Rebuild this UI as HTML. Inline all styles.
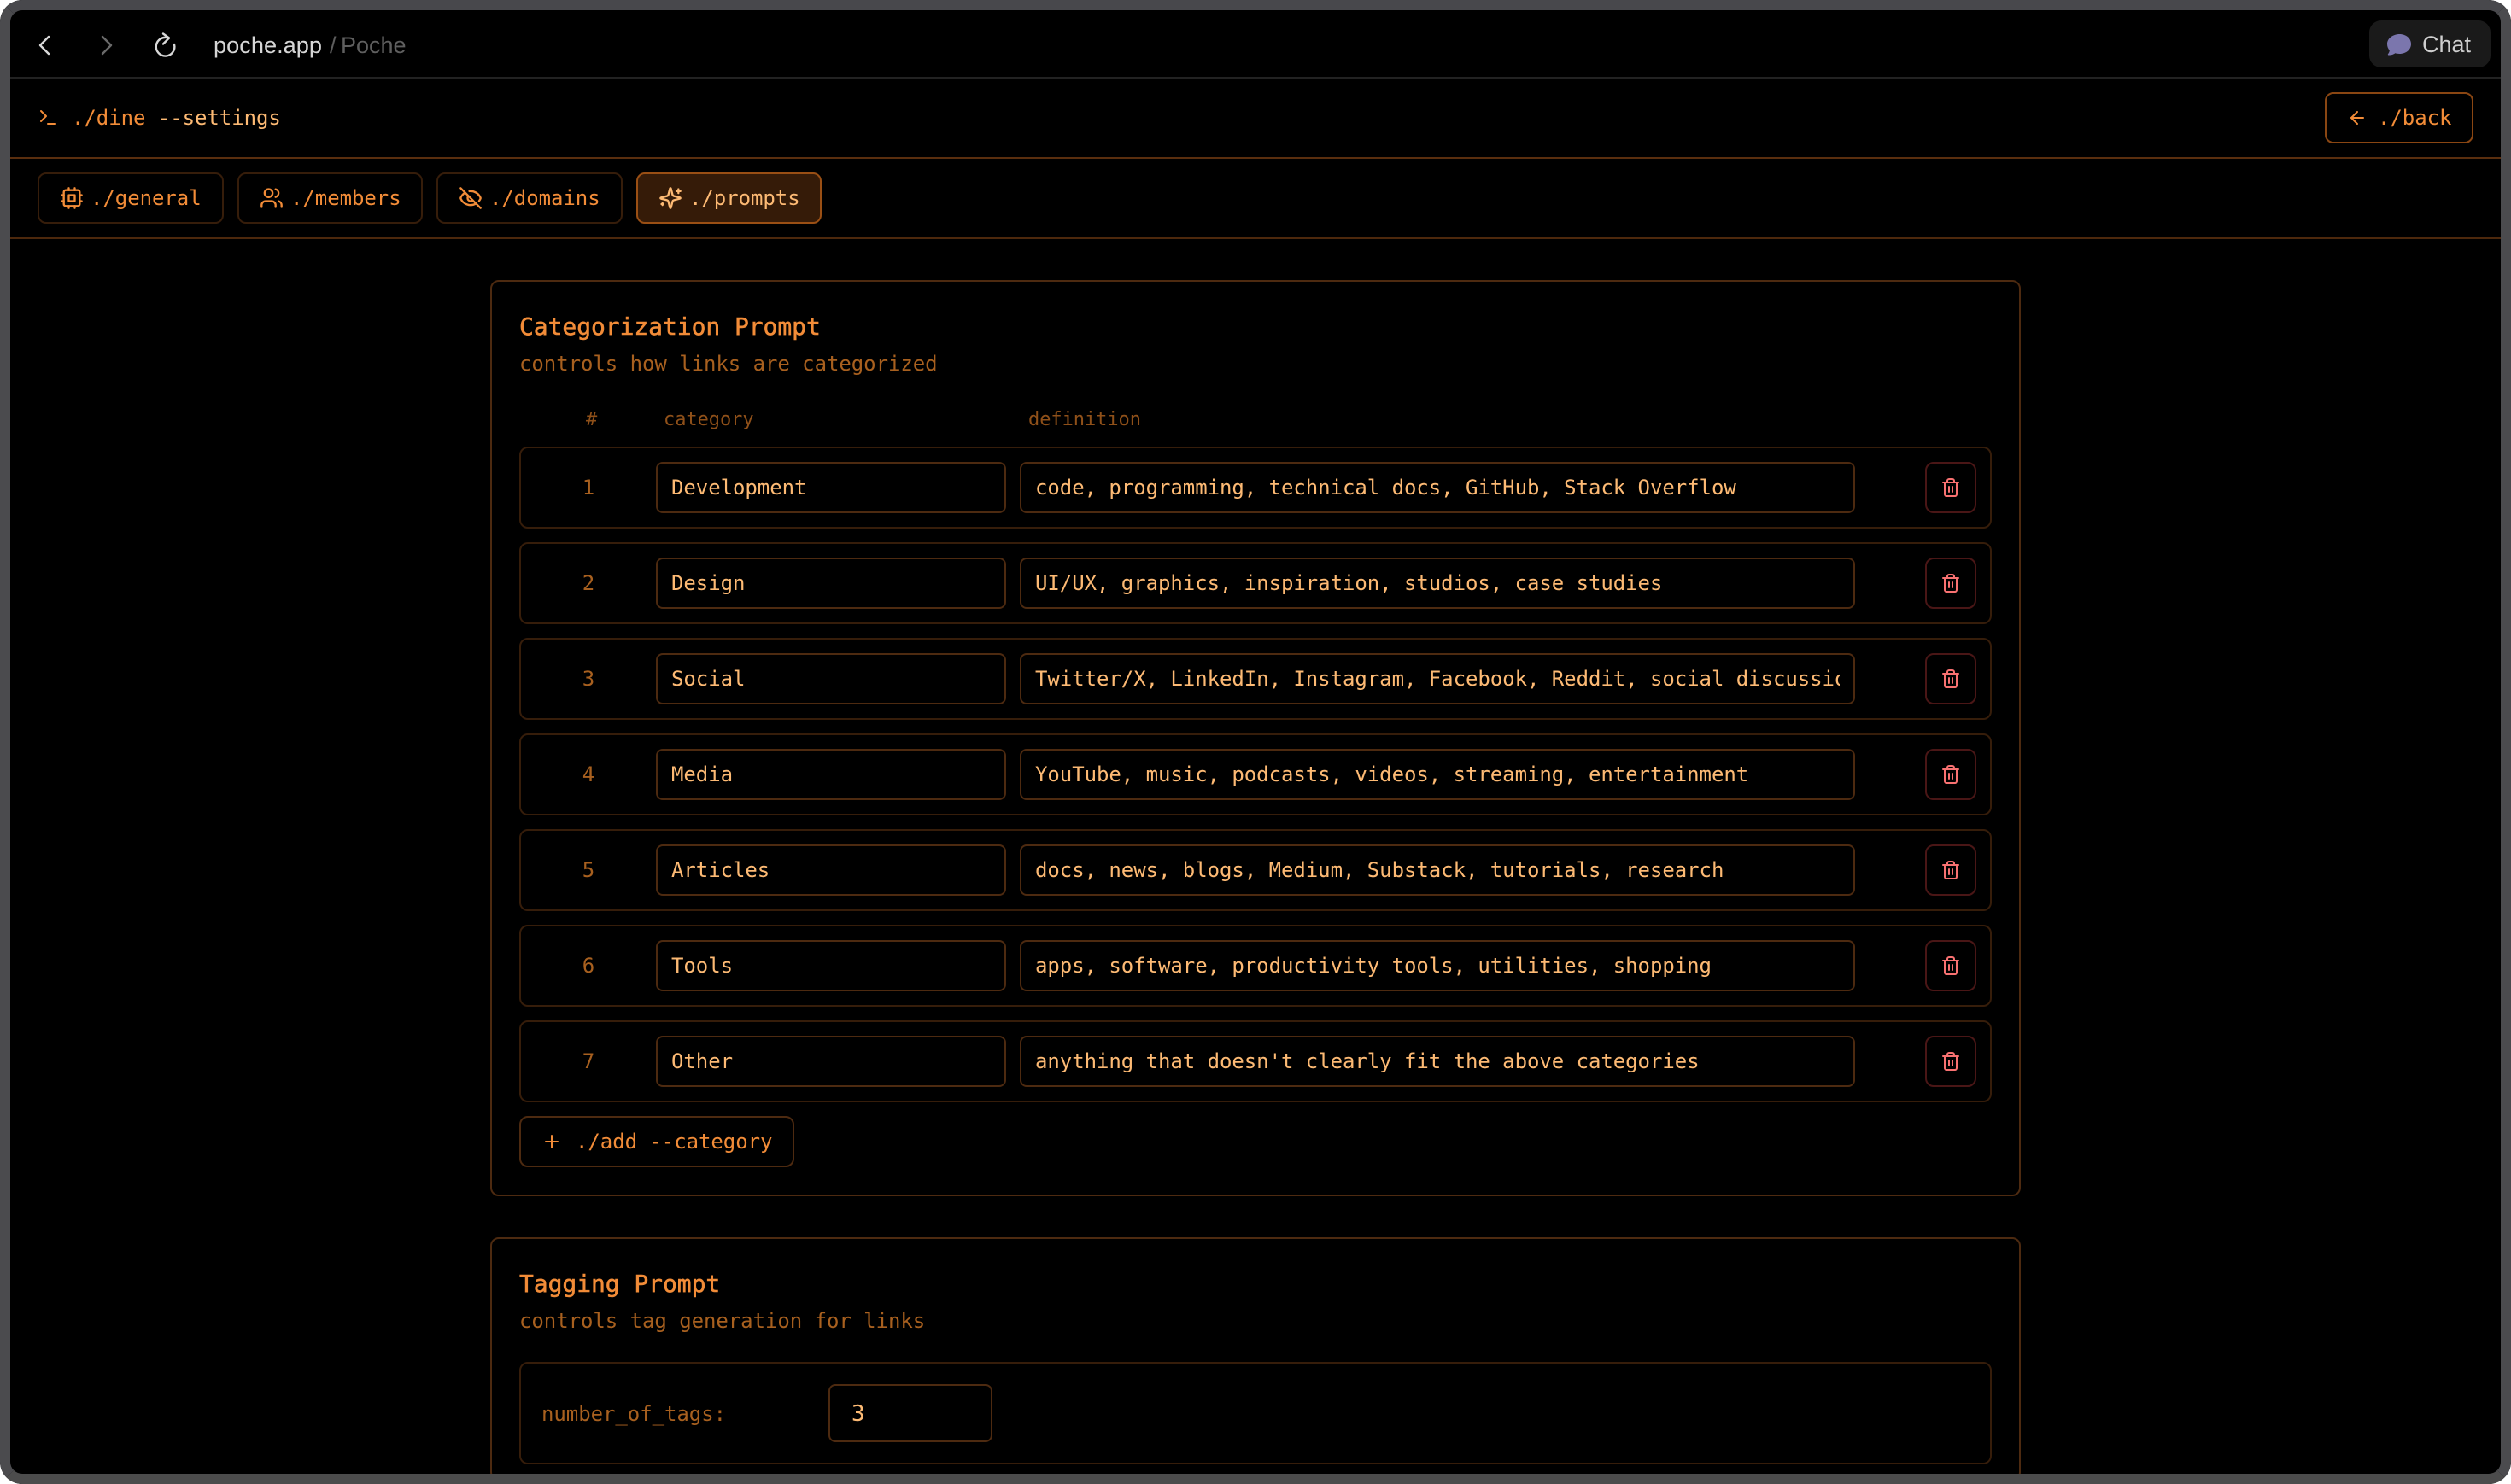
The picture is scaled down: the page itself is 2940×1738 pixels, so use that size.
<!DOCTYPE html>
<html><head><meta charset="utf-8"><title>Poche</title>
<style>
html,body{margin:0;padding:0;background:#fff;width:2940px;height:1738px;overflow:hidden}
#w{position:absolute;left:0;top:0;width:2940px;height:1738px;border-radius:26px;overflow:hidden;background:#000}
#f{position:absolute;left:0;top:0;width:2940px;height:1738px;box-sizing:border-box;border:12px solid #4b4b4e;border-top-color:#48484c;border-bottom-color:#4c4c4c;border-radius:26px;z-index:9}
.a{position:absolute;box-sizing:border-box}
.t{position:absolute;white-space:pre;font-family:"DejaVu Sans Mono","Liberation Mono",monospace;font-size:24px;letter-spacing:-.05px;line-height:32px;color:#f28c38}
.s{position:absolute;white-space:pre;font-family:"Liberation Sans",sans-serif;font-size:27px;line-height:32px}
.l{position:absolute;left:12px;width:2916px;height:2px}
.tab{position:absolute;top:202px;height:60px;box-sizing:border-box;border:2px solid #361d0a;border-radius:10px}
.bx{position:absolute;box-sizing:border-box;border:2px solid #4d2a10;border-radius:10px}
.row{position:absolute;left:608px;width:1724px;height:96px;box-sizing:border-box;border:2px solid #361d0a;border-radius:10px}
.inp{position:absolute;top:16px;height:60px;box-sizing:border-box;border:2px solid #4d2a10;border-radius:8px;background:#000;overflow:hidden;padding:0 16px;color:#fdba74;font-family:"DejaVu Sans Mono","Liberation Mono",monospace;font-size:24px;letter-spacing:-.05px;line-height:56px}
.inp span{display:block;overflow:hidden;white-space:pre}
.c1{left:158px;width:410px}
.c2{left:584px;width:978px}
.n{position:absolute;left:64px;width:30px;top:30px;text-align:center;color:#a8601f;font-family:"DejaVu Sans Mono","Liberation Mono",monospace;font-size:24px;line-height:32px}
.del{position:absolute;left:1644px;top:16px;width:60px;height:60px;box-sizing:border-box;border:2px solid #4a1616;border-radius:10px}
.del svg{position:absolute;left:16px;top:16px}
svg{display:block;fill:none;stroke-linecap:round;stroke-linejoin:round}
svg.ab{position:absolute}
.sub{color:#a8601f}
.hd{color:#8f5019;font-size:22px;letter-spacing:-.05px}
.ti{font-size:28px;line-height:36px;font-weight:400;-webkit-text-stroke:.5px #f28c38;letter-spacing:-.06px}
</style></head><body>
<div id="w">
<!-- browser bar -->
<svg class="ab" style="left:30px;top:20px" width="200" height="70" viewBox="0 0 200 70" stroke-width="2.400">
<path d="M27 23 17 33 27 43" stroke="#d8d8d8"/>
<path d="M90 23 100 33 90 43" stroke="#6a6a6a"/>
<path d="M167 24.500A10.800 10.800 0 1 0 174 32" stroke="#d8d8d8"/>
<path d="M161 19.500 168 24.500 161 31.500" stroke="#d8d8d8"/>
</svg>
<div class="s" style="left:250px;top:37px;color:#d6d6d6;font-size:27.200px">poche.app</div>
<div class="s" style="left:386px;top:37px;color:#5f5f5f">/</div>
<div class="s" style="left:399px;top:37px;color:#5f5f5f">Poche</div>
<div class="a" style="left:2774px;top:24px;width:142px;height:55px;background:#1a1a1a;border-radius:14px"></div>
<svg class="ab" style="left:2795px;top:40px" width="28" height="25" viewBox="0 0 28 25"><path fill="#7b76ad" d="M14.500 0C22 0 28 4.800 28 11.500S22 23 14.500 23C12.500 23 11 22.800 9.500 22.300 7.500 23.800 4.500 24.800 1.500 24.500.800 24.400.600 23.700 1 23.200 2 22 2.700 20.500 2.800 19 1 17 0 14.500 0 11.500 0 4.800 7 0 14.500 0Z"/></svg>
<div class="s" style="left:2836px;top:36px;color:#cfcfcf">Chat</div>
<div class="l" style="top:90px;background:#222"></div>

<!-- header -->
<svg class="ab" style="left:44px;top:126px" width="24" height="24" viewBox="0 0 24 24" stroke="#f28c38" stroke-width="2"><polyline points="4 17 10 11 4 5" transform="translate(0,-1)"/><line x1="12" y1="19" x2="20" y2="19"/></svg>
<div class="t" style="left:84px;top:122px">./dine <span style="color:#fdba74">--settings</span></div>
<div class="bx" style="left:2722px;top:108px;width:174px;height:60px;border-color:#8a4612"></div>
<svg class="ab" style="left:2748px;top:126px" width="24" height="24" viewBox="0 0 24 24" stroke="#f28c38" stroke-width="2"><path d="m12 19-7-7 7-7"/><path d="M19 12H5"/></svg>
<div class="t" style="left:2784px;top:122px">./back</div>
<div class="l" style="top:184px;background:#5a2e0e"></div>

<!-- tabs -->
<div class="tab" style="left:44px;width:218px"></div>
<svg class="ab" style="left:70px;top:218px" width="28" height="28" viewBox="0 0 24 24" stroke="#f28c38" stroke-width="2"><rect x="4" y="4" width="16" height="16" rx="2"/><rect x="9" y="9" width="6" height="6"/><path d="M15 2v2M15 20v2M2 15h2M2 9h2M20 15h2M20 9h2M9 2v2M9 20v2"/></svg>
<div class="t" style="left:106px;top:216px">./general</div>
<div class="tab" style="left:278px;width:217px"></div>
<svg class="ab" style="left:304px;top:218px" width="28" height="28" viewBox="0 0 24 24" stroke="#f28c38" stroke-width="2"><path d="M16 21v-2a4 4 0 0 0-4-4H6a4 4 0 0 0-4 4v2"/><circle cx="9" cy="7" r="4"/><path d="M22 21v-2a4 4 0 0 0-3-3.870"/><path d="M16 3.130a4 4 0 0 1 0 7.750"/></svg>
<div class="t" style="left:340px;top:216px">./members</div>
<div class="tab" style="left:511px;width:218px"></div>
<svg class="ab" style="left:537px;top:218px" width="28" height="28" viewBox="0 0 24 24" stroke="#f28c38" stroke-width="2"><path d="M10.733 5.076a10.744 10.744 0 0 1 11.205 6.575 1 1 0 0 1 0 .696 10.747 10.747 0 0 1-1.444 2.490"/><path d="M14.084 14.158a3 3 0 0 1-4.242-4.242"/><path d="M17.479 17.499a10.750 10.750 0 0 1-15.417-5.151 1 1 0 0 1 0-.696 10.750 10.750 0 0 1 4.446-5.143"/><path d="m2 2 20 20"/></svg>
<div class="t" style="left:573px;top:216px">./domains</div>
<div class="tab" style="left:745px;width:217px;background:#351b08;border-color:#9a4f14"></div>
<svg class="ab" style="left:771px;top:218px" width="28" height="28" viewBox="0 0 24 24" stroke="#fdba74" stroke-width="2"><path d="M9.937 15.500A2 2 0 0 0 8.500 14.063l-6.135-1.582a.5.5 0 0 1 0-.962L8.500 9.936A2 2 0 0 0 9.937 8.500l1.582-6.135a.5.5 0 0 1 .963 0L14.063 8.500A2 2 0 0 0 15.500 9.937l6.135 1.581a.5.5 0 0 1 0 .964L15.500 14.063a2 2 0 0 0-1.437 1.437l-1.582 6.135a.5.5 0 0 1-.963 0z"/><path d="M20 3v4M22 5h-4M4 17v2M5 18H3"/></svg>
<div class="t" style="left:807px;top:216px;color:#fdba74">./prompts</div>
<div class="l" style="top:278px;background:#4d280c"></div>

<!-- card 1 -->
<div class="bx" style="left:574px;top:328px;width:1792px;height:1073px"></div>
<div class="t ti" style="left:608px;top:365px">Categorization Prompt</div>
<div class="t sub" style="left:608px;top:410px">controls how links are categorized</div>
<div class="t hd" style="left:686px;top:476px">#</div>
<div class="t hd" style="left:777px;top:476px">category</div>
<div class="t hd" style="left:1204px;top:476px">definition</div>

<div class="row" style="top:523px"><div class="n">1</div><div class="inp c1"><span>Development</span></div><div class="inp c2"><span>code, programming, technical docs, GitHub, Stack Overflow</span></div><div class="del"><svg width="24" height="24" viewBox="0 0 24 24" stroke="#f87171" stroke-width="2"><path d="M3 6h18M19 6v14c0 1-1 2-2 2H7c-1 0-2-1-2-2V6M8 6V4c0-1 1-2 2-2h4c1 0 2 1 2 2v2M10 11v6M14 11v6"/></svg></div></div>
<div class="row" style="top:635px"><div class="n">2</div><div class="inp c1"><span>Design</span></div><div class="inp c2"><span>UI/UX, graphics, inspiration, studios, case studies</span></div><div class="del"><svg width="24" height="24" viewBox="0 0 24 24" stroke="#f87171" stroke-width="2"><path d="M3 6h18M19 6v14c0 1-1 2-2 2H7c-1 0-2-1-2-2V6M8 6V4c0-1 1-2 2-2h4c1 0 2 1 2 2v2M10 11v6M14 11v6"/></svg></div></div>
<div class="row" style="top:747px"><div class="n">3</div><div class="inp c1"><span>Social</span></div><div class="inp c2"><span>Twitter/X, LinkedIn, Instagram, Facebook, Reddit, social discussions</span></div><div class="del"><svg width="24" height="24" viewBox="0 0 24 24" stroke="#f87171" stroke-width="2"><path d="M3 6h18M19 6v14c0 1-1 2-2 2H7c-1 0-2-1-2-2V6M8 6V4c0-1 1-2 2-2h4c1 0 2 1 2 2v2M10 11v6M14 11v6"/></svg></div></div>
<div class="row" style="top:859px"><div class="n">4</div><div class="inp c1"><span>Media</span></div><div class="inp c2"><span>YouTube, music, podcasts, videos, streaming, entertainment</span></div><div class="del"><svg width="24" height="24" viewBox="0 0 24 24" stroke="#f87171" stroke-width="2"><path d="M3 6h18M19 6v14c0 1-1 2-2 2H7c-1 0-2-1-2-2V6M8 6V4c0-1 1-2 2-2h4c1 0 2 1 2 2v2M10 11v6M14 11v6"/></svg></div></div>
<div class="row" style="top:971px"><div class="n">5</div><div class="inp c1"><span>Articles</span></div><div class="inp c2"><span>docs, news, blogs, Medium, Substack, tutorials, research</span></div><div class="del"><svg width="24" height="24" viewBox="0 0 24 24" stroke="#f87171" stroke-width="2"><path d="M3 6h18M19 6v14c0 1-1 2-2 2H7c-1 0-2-1-2-2V6M8 6V4c0-1 1-2 2-2h4c1 0 2 1 2 2v2M10 11v6M14 11v6"/></svg></div></div>
<div class="row" style="top:1083px"><div class="n">6</div><div class="inp c1"><span>Tools</span></div><div class="inp c2"><span>apps, software, productivity tools, utilities, shopping</span></div><div class="del"><svg width="24" height="24" viewBox="0 0 24 24" stroke="#f87171" stroke-width="2"><path d="M3 6h18M19 6v14c0 1-1 2-2 2H7c-1 0-2-1-2-2V6M8 6V4c0-1 1-2 2-2h4c1 0 2 1 2 2v2M10 11v6M14 11v6"/></svg></div></div>
<div class="row" style="top:1195px"><div class="n">7</div><div class="inp c1"><span>Other</span></div><div class="inp c2"><span>anything that doesn't clearly fit the above categories</span></div><div class="del"><svg width="24" height="24" viewBox="0 0 24 24" stroke="#f87171" stroke-width="2"><path d="M3 6h18M19 6v14c0 1-1 2-2 2H7c-1 0-2-1-2-2V6M8 6V4c0-1 1-2 2-2h4c1 0 2 1 2 2v2M10 11v6M14 11v6"/></svg></div></div>

<div class="bx" style="left:608px;top:1307px;width:322px;height:60px"></div>
<svg class="ab" style="left:634px;top:1325px" width="24" height="24" viewBox="0 0 24 24" stroke="#f28c38" stroke-width="2"><path d="M5 12h14M12 5v14"/></svg>
<div class="t" style="left:674px;top:1321px">./add --category</div>

<!-- card 2 -->
<div class="bx" style="left:574px;top:1449px;width:1792px;height:285px"></div>
<div class="t ti" style="left:608px;top:1486px">Tagging Prompt</div>
<div class="t sub" style="left:608px;top:1531px">controls tag generation for links</div>
<div class="bx" style="left:608px;top:1595px;width:1724px;height:120px;border-color:#361d0a"></div>
<div class="t" style="left:634px;top:1640px;color:#a8601f">number_of_tags:</div>
<div class="bx" style="left:970px;top:1621px;width:192px;height:68px;border-radius:8px"></div>
<div class="t" style="left:997px;top:1640px;color:#fdba74;font-size:26px">3</div>

<div id="f"></div>
</div>
</body></html>
